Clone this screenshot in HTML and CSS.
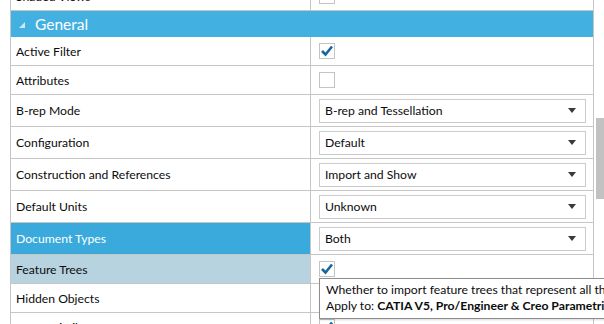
FILE: index.html
```
<!DOCTYPE html>
<html lang="en">
<head>
  <meta charset="UTF-8" />
  <title>Import Settings</title>
  <link rel="stylesheet" href="styles.css">
</head>
<body>

<div class="view">
  <div class="grid">
    <div class="row check first">
      <div class="label">Shaded Views</div>
      <div class="value"><span class="box"></span></div>
    </div>

    <div class="group">
      <svg class="toggle" width="6" height="6" viewBox="0 0 6 6"><polygon points="6,0 6,6 0,6" /></svg>
      <span>General</span>
    </div>

    <div class="row check">
      <div class="label">Active Filter</div>
      <div class="value"><span class="box"><svg width="16" height="16" viewBox="0 0 16 16"><path d="M3 8 L6.5 11.5 L13 3.5" /></svg></span></div>
    </div>
    <div class="row check">
      <div class="label">Attributes</div>
      <div class="value"><span class="box"></span></div>
    </div>
    <div class="row drop">
      <div class="label">B-rep Mode</div>
      <div class="value"><div class="select">B-rep and Tessellation<span class="arrow"></span></div></div>
    </div>
    <div class="row drop">
      <div class="label">Configuration</div>
      <div class="value"><div class="select">Default<span class="arrow"></span></div></div>
    </div>
    <div class="row drop">
      <div class="label">Construction and References</div>
      <div class="value"><div class="select">Import and Show<span class="arrow"></span></div></div>
    </div>
    <div class="row drop">
      <div class="label">Default Units</div>
      <div class="value"><div class="select">Unknown<span class="arrow"></span></div></div>
    </div>
    <div class="row drop selected">
      <div class="label">Document Types</div>
      <div class="value"><div class="select">Both<span class="arrow"></span></div></div>
    </div>
    <div class="row check hover">
      <div class="label">Feature Trees</div>
      <div class="value"><span class="box"><svg width="16" height="16" viewBox="0 0 16 16"><path d="M3 8 L6.5 11.5 L13 3.5" /></svg></span></div>
    </div>
    <div class="row check">
      <div class="label">Hidden Objects</div>
      <div class="value"><span class="box"></span></div>
    </div>
    <div class="row check">
      <div class="label">Group Similar</div>
      <div class="value"><span class="box"><svg width="16" height="16" viewBox="0 0 16 16"><path d="M3 8 L6.5 11.5 L13 3.5" /></svg></span></div>
    </div>

    <!-- tooltip for the hovered Feature Trees row -->
    <div class="tip">
      <div>Whether to import feature trees that represent all the construction history of the part.</div>
      <div>Apply to: <b>CATIA V5, Pro/Engineer &amp; Creo Parametric, SolidWorks</b></div>
    </div>
  </div>

  <div class="scrollbar">
    <div class="thumb"></div>
  </div>
</div>

</body>
</html>
```

FILE: styles.css
```
body {
  margin: 0;
  background: #fff;
  color: #0c0c0c;
  font-family: Lato, "Noto Sans", sans-serif;
  font-size: 12.2px;
  overflow: hidden;
  height: 324px;
}
.view {
  display: flex;
  height: 324px;
  overflow: hidden;
}
.grid {
  position: relative;
  width: 582px;
  margin-left: 10px;
  border-left: 1px solid #c6c6c6;
  border-right: 1px solid #c6c6c6;
  flex: none;
}
.row {
  display: flex;
  border-bottom: 1px solid #c6c6c6;
}
.row.check { height: 28px; }
.row.drop { height: 31px; }
.row.first { margin-top: -18px; }
.label {
  width: 294px;
  padding-left: 5px;
  border-right: 1px solid #c6c6c6;
  display: flex;
  align-items: center;
  white-space: nowrap;
}
.value {
  flex: 1;
  display: flex;
  align-items: center;
  padding-left: 8px;
  padding-right: 7px;
}
.row.selected .label {
  background: #3aa9db;
  color: #fff;
}
.row.hover .label {
  background: #b7d3df;
}

/* group header */
.group {
  height: 26px;
  background: #42b0e0;
  color: #fff;
  display: flex;
  align-items: center;
  font-size: 15.5px;
}
.toggle {
  margin-left: 8px;
  margin-right: 10px;
  margin-top: 1px;
}
.toggle polygon { fill: #cde9f6; }

/* checkbox */
.box {
  width: 14px;
  height: 14px;
  border: 1px solid #c4c4c4;
  background: #fff;
  display: block;
}
.box svg {
  display: block;
  margin: -1px 0 0 -1px;
}
.box path {
  fill: none;
  stroke: #17689d;
  stroke-width: 2.6;
}

/* dropdown */
.select {
  flex: 1;
  height: 22px;
  border: 1px solid #cbcbcb;
  display: flex;
  align-items: center;
  justify-content: space-between;
  padding: 0 9px 0 5px;
  background: #fff;
}
.arrow {
  width: 0;
  height: 0;
  border-left: 4px solid transparent;
  border-right: 4px solid transparent;
  border-top: 5px solid #3a3a3a;
}

/* tooltip */
.tip {
  position: absolute;
  left: 308px;
  top: 278px;
  width: 420px;
  padding: 3px 6px 4px;
  border: 1px solid #8e8e8e;
  background: #fff;
  white-space: nowrap;
  line-height: 16px;
  box-shadow: 1px 1px 2px rgba(0,0,0,0.15);
}

/* scrollbar */
.scrollbar {
  width: 11px;
  flex: none;
  background: #fff;
}
.thumb {
  margin: 118px 0 0 2px;
  width: 9px;
  height: 81px;
  background: #c2c2c2;
}
```
